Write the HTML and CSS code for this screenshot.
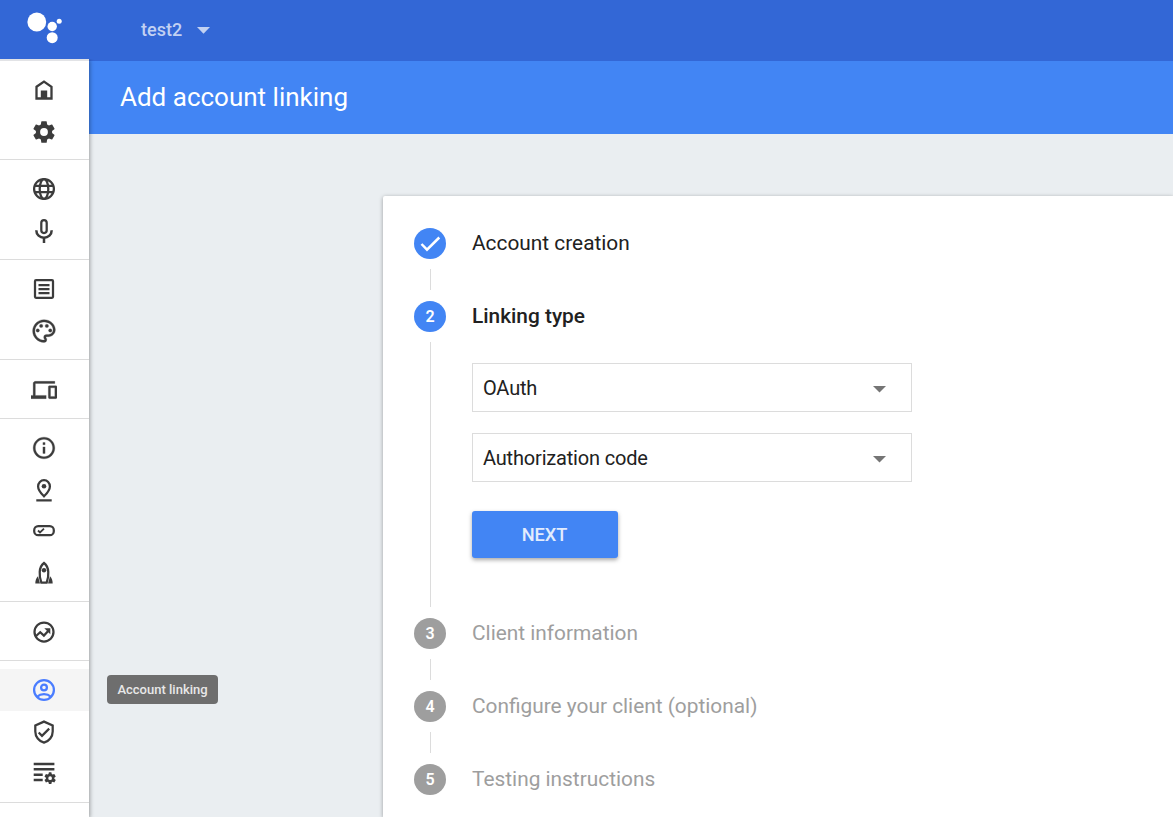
FILE: index.html
```
<!DOCTYPE html>
<html lang="en">
<head>
<meta charset="utf-8">
<title>Add account linking</title>
<link rel="stylesheet" href="styles.css">
</head>
<body>
<div class="app">
  <aside class="side">
    <div class="logo">
      <svg width="89" height="59" viewBox="0 0 89 59"><g fill="#fff"><circle cx="36.8" cy="22" r="9.4"/><circle cx="52.2" cy="26.5" r="4.7"/><circle cx="59.2" cy="21.2" r="2.5"/><circle cx="52.2" cy="37.7" r="5.5"/></g></svg>
    </div>
    <nav class="nav">
      <div class="group first">
        <a class="item"><svg class="icon" viewBox="0 0 26 26"><path d="M5.500 9.800 13 4.600l7.500 5.200v11.700h-15z" fill="none" stroke="currentColor" stroke-width="2.300"/><path d="M9.800 13.500h6.400v8.500H9.800z"/></svg></a>
        <a class="item"><svg class="icon" viewBox="0 0 24 24"><path fill-rule="evenodd" d="M19.430 12.980c.04-.32.07-.64.07-.98s-.03-.66-.07-.98l2.110-1.650c.19-.15.24-.42.12-.64l-2-3.460c-.12-.22-.39-.3-.61-.22l-2.490 1c-.52-.4-1.080-.73-1.690-.98l-.38-2.650A.488.488 0 0 0 14 2h-4c-.25 0-.46.18-.49.42l-.38 2.650c-.61.25-1.170.59-1.690.98l-2.490-1c-.23-.09-.49 0-.61.22l-2 3.460c-.13.22-.07.49.12.64l2.110 1.650c-.04.32-.07.65-.07.98s.03.66.07.98l-2.110 1.650c-.19.15-.24.42-.12.64l2 3.460c.12.22.39.3.61.22l2.490-1c.52.4 1.080.73 1.690.98l.38 2.650c.03.24.24.42.49.42h4c.25 0 .46-.18.49-.42l.38-2.650c.61-.25 1.170-.59 1.690-.98l2.490 1c.23.09.49 0 .61-.22l2-3.460c.12-.22.07-.49-.12-.64l-2.110-1.650zM12 15.600a3.600 3.600 0 1 1 0-7.200 3.600 3.600 0 0 1 0 7.200z"/></svg></a>
      </div>
      <div class="group">
        <a class="item"><svg class="icon line" viewBox="0 0 26 26"><circle cx="13" cy="13" r="9.900"/><ellipse cx="13" cy="13" rx="4.300" ry="9.900"/><path d="M3.800 9.800h18.400M3.800 16.200h18.400"/></svg></a>
        <a class="item"><svg class="icon line" viewBox="0 0 26 26"><rect x="10.300" y="2" width="5.400" height="13" rx="2.700"/><path d="M5.300 12.200c0 4.500 3.500 7.600 7.700 7.600s7.700-3.100 7.700-7.600M13 19.500V25" stroke-width="2.500"/></svg></a>
      </div>
      <div class="group">
        <a class="item"><svg class="icon line" viewBox="0 0 26 26"><rect x="4" y="4.200" width="18" height="17.600" rx="1"/><path d="M7.500 9h11M7.500 13h11M7.500 17h11"/></svg></a>
        <a class="item"><svg class="icon heavy" viewBox="0 0 24 24"><g transform="translate(-.6 -.6) scale(1.050)"><path d="M12 22C6.490 22 2 17.510 2 12S6.490 2 12 2s10 4.040 10 9c0 3.310-2.690 6-6 6h-1.770c-.28 0-.5.22-.5.5 0 .12.05.23.13.33.41.47.64 1.060.64 1.670A2.500 2.500 0 0 1 12 22zm0-18c-4.410 0-8 3.590-8 8s3.590 8 8 8c.28 0 .5-.22.5-.5a.54.54 0 0 0-.14-.35c-.41-.46-.63-1.050-.63-1.650a2.500 2.500 0 0 1 2.500-2.500H16c2.210 0 4-1.790 4-4 0-3.860-3.590-7-8-7z"/><circle cx="6.500" cy="11.500" r="1.500"/><circle cx="9.500" cy="7.500" r="1.500"/><circle cx="14.500" cy="7.500" r="1.500"/><circle cx="17.500" cy="11.500" r="1.500"/></g></svg></a>
      </div>
      <div class="group">
        <a class="item"><svg class="icon heavy" viewBox="0 0 24 24"><path d="M4 6h18V4H4c-1.100 0-2 .9-2 2v11H0v3h14v-3H4V6zm19 2h-6c-.55 0-1 .45-1 1v10c0 .55.45 1 1 1h6c.55 0 1-.45 1-1V9c0-.55-.45-1-1-1zm-1 9.900h-4V10h4v7.900z"/></svg></a>
      </div>
      <div class="group">
        <a class="item"><svg class="icon heavy" viewBox="0 0 24 24"><path d="M11 7h2v2h-2zm0 4h2v6h-2zm1-9C6.480 2 2 6.480 2 12s4.480 10 10 10 10-4.480 10-10S17.520 2 12 2zm0 18c-4.410 0-8-3.590-8-8s3.590-8 8-8 8 3.590 8 8-3.590 8-8 8z"/></svg></a>
        <a class="item"><svg class="icon line" viewBox="0 0 26 26"><path d="M13 19.300c-3.900-3.900-5.900-6.900-5.900-9.900a5.900 6.300 0 0 1 11.800 0c0 3-2 6-5.900 9.900zM5.300 23.300h15.400"/><circle class="dot" cx="13" cy="9.200" r="2.300"/></svg></a>
        <a class="item"><svg class="icon line" viewBox="0 0 26 26"><rect x="3.200" y="8.200" width="19.600" height="9" rx="4"/><path d="m7 12.500 2 2 4-3.800" stroke-width="1.800"/></svg></a>
        <a class="item"><svg class="icon line" viewBox="0 0 26 26"><path d="M10.300 22.700C8 16 7.500 7 13 3c5.500 4 5 13 2.700 19.700z"/><path class="dot" d="m7 16.300 2 7.300H4.300c0-2.900.8-5.600 2.700-7.300zM19 16.300l-2 7.300h4.700c0-2.900-.8-5.600-2.700-7.300z"/><circle class="dot" cx="13" cy="10.200" r="2.200"/></svg></a>
      </div>
      <div class="group">
        <a class="item"><svg class="icon line" viewBox="0 0 26 26"><circle cx="13" cy="13" r="9.500"/><path d="m4.500 17.500 4.700-4.300 3.700 3.400 5-5.300"/><path class="dot" d="M13.300 9.200h6v6z"/></svg></a>
      </div>
      <div class="group">
        <a class="item active"><svg class="icon line" viewBox="0 0 26 26"><circle cx="13" cy="13" r="9.900"/><circle cx="13" cy="10.500" r="2.900"/><path d="M6 19.800c3.800-3.500 10.200-3.500 14 0"/></svg></a>
        <a class="item"><svg class="icon line" viewBox="0 0 26 26"><path d="m13 2.600 8.700 3.900v6c0 5.200-3.600 9.700-8.700 11.200-5.100-1.500-8.700-6-8.700-11.200v-6z"/><path d="m7.700 13.500 3.300 3.300 7.200-7.200"/></svg></a>
        <a class="item"><svg class="icon" viewBox="0 0 26 26"><path d="M2.700 2.800h20.700v2.500H2.700zM2.700 8.100h20.700v2.500H2.700zM2.700 13.400h9v2.500h-9zM2.700 18.700h9v2.500h-9z"/><g transform="translate(12.400 11.500) scale(.56)"><path fill-rule="evenodd" d="M19.500 12.980v-1.960l2.600-2.100-2.600-4.600-3.200 1.200-1.400-.9L14.200 1.500H9.800l-.7 3.100-1.400.9-3.200-1.200-2.600 4.600 2.600 2.100v1.960l-2.600 2.100 2.600 4.600 3.200-1.200 1.400.9.7 3.100h4.400l.7-3.100 1.400-.9 3.200 1.200 2.600-4.600zM12 15.300a3.300 3.300 0 1 1 0-6.600 3.300 3.300 0 0 1 0 6.600z"/></g></svg></a>
      </div>
    </nav>
  </aside>
  <main class="main">
    <header class="top"><span class="project">test2</span><svg class="caret" width="13" height="7" viewBox="0 0 13 7"><path d="M0 0h13L6.500 6.700z"/></svg></header>
    <div class="banner"><h1 class="title">Add account linking</h1></div>
    <div class="content">
      <section class="card">
        <div class="step"><span class="badge"><svg width="32" height="31" viewBox="0 0 32 31"><path d="m7.500 16 5.500 5.700L25.300 9.500" fill="none" stroke="#fff" stroke-width="2.500"/></svg></span><span class="label">Account creation</span></div>
        <div class="rail"></div>
        <div class="step"><span class="badge">2</span><span class="label current">Linking type</span></div>
        <div class="open">
          <div class="rail long"></div>
          <div class="form">
            <div class="select"><span>OAuth</span><svg width="13" height="7" viewBox="0 0 13 7"><path d="M0 0h13L6.500 6.500z"/></svg></div>
            <div class="select"><span>Authorization code</span><svg width="13" height="7" viewBox="0 0 13 7"><path d="M0 0h13L6.500 6.500z"/></svg></div>
            <button class="next">NEXT</button>
          </div>
        </div>
        <div class="step pending"><span class="badge">3</span><span class="label">Client information</span></div>
        <div class="rail"></div>
        <div class="step pending"><span class="badge">4</span><span class="label">Configure your client (optional)</span></div>
        <div class="rail"></div>
        <div class="step pending"><span class="badge">5</span><span class="label">Testing instructions</span></div>
      </section>
    </div>
  </main>
  <div class="tooltip">Account linking</div>
</div>
</body>
</html>
```
FILE: styles.css
```
* { box-sizing: border-box; }
body { margin: 0; font-family: Roboto, "Liberation Sans", sans-serif; color: #212121; }
.app { position: relative; display: grid; grid-template-columns: 89px 1fr; height: 817px; overflow: hidden; background: #eaeef1; }
.side { z-index: 1; display: flex; flex-direction: column; min-height: 0; }
.logo { height: 59px; flex: none; background: #3367d6; }
.logo svg { display: block; }
.nav { flex: 1; background: #fff; border-top: 2px solid #e2e3e6; box-shadow: 1px 1px 4px rgba(0,0,0,.34); clip-path: inset(0 -8px 0 0); }
.group { padding: 8px 0; border-bottom: 1px solid #dcdcdc; }
.first { padding-bottom: 6.8px; }
.item { display: flex; align-items: center; justify-content: center; height: 41.6px; padding: 1px 1px 0 0; color: #3c3c3c; }
.active { background: #f5f5f5; color: #4a7dff; }
.icon { width: 26px; height: 26px; display: block; fill: currentColor; }
.heavy { stroke: currentColor; stroke-width: .25; }
.line { fill: none; stroke: currentColor; stroke-width: 2.25; }
.dot { fill: currentColor; stroke: none; }
.main { min-width: 0; display: flex; flex-direction: column; }
.top { height: 61px; flex: none; display: flex; align-items: center; gap: 15px; padding: 0 0 2px 52px; background: #3367d6; color: #c2d1f2; }
.project { font-size: 18px; font-weight: 500; line-height: 24px; }
.caret { fill: #c2d1f2; margin-top: 2px; }
.banner { height: 73px; flex: none; display: flex; align-items: center; padding: 0 0 2px 31px; background: #4285f4; }
.title { margin: 0; font-size: 26px; font-weight: 400; line-height: 32px; color: #fff; }
.content { flex: 1; padding: 62px 0 0 294px; }
.card { height: 100%; padding: 32px 0 0 31px; background: #fff; border-radius: 2px 0 0 0; box-shadow: 0 1px 4px rgba(0,0,0,.35); }
.step { display: flex; align-items: center; gap: 26px; height: 31px; }
.badge { display: flex; align-items: center; justify-content: center; width: 32px; height: 31px; border-radius: 50%; background: #4285f4; color: #fff; font-size: 16px; font-weight: 600; }
.label { font-size: 20.85px; line-height: 28px; padding-bottom: 2px; }
.current { font-weight: 500; }
.pending .badge { background: #9e9e9e; }
.pending .label { color: #9e9e9e; }
.rail { width: 1px; height: 21px; margin: 10px 0 11px 16px; background: #dcdcdc; }
.open { display: flex; }
.long { height: 265px; flex: none; }
.form { padding: 31px 0 0 41px; }
.select { display: flex; align-items: center; justify-content: space-between; width: 440px; height: 49px; margin-bottom: 21px; padding: 0 25px 0 10px; border: 1px solid #dcdcdc; font-size: 20px; letter-spacing: -.18px; }
.select svg { fill: #757575; margin-top: 3px; }
.next { display: block; width: 146px; height: 47px; margin-top: 29px; padding: 0 7px 0 6px; border: 0; border-radius: 3px; background: #4285f4; color: #e3ecfd; font: 500 18.2px Roboto, "Liberation Sans", sans-serif; box-shadow: 0 2px 4px rgba(0,0,0,.35); }
.tooltip { position: absolute; z-index: 2; left: 107px; top: 675px; width: 111px; height: 29px; border-radius: 4px; background: #6e6e6e; color: #e8e8e8; font-size: 13px; font-weight: 500; line-height: 29px; text-align: center; }
```
